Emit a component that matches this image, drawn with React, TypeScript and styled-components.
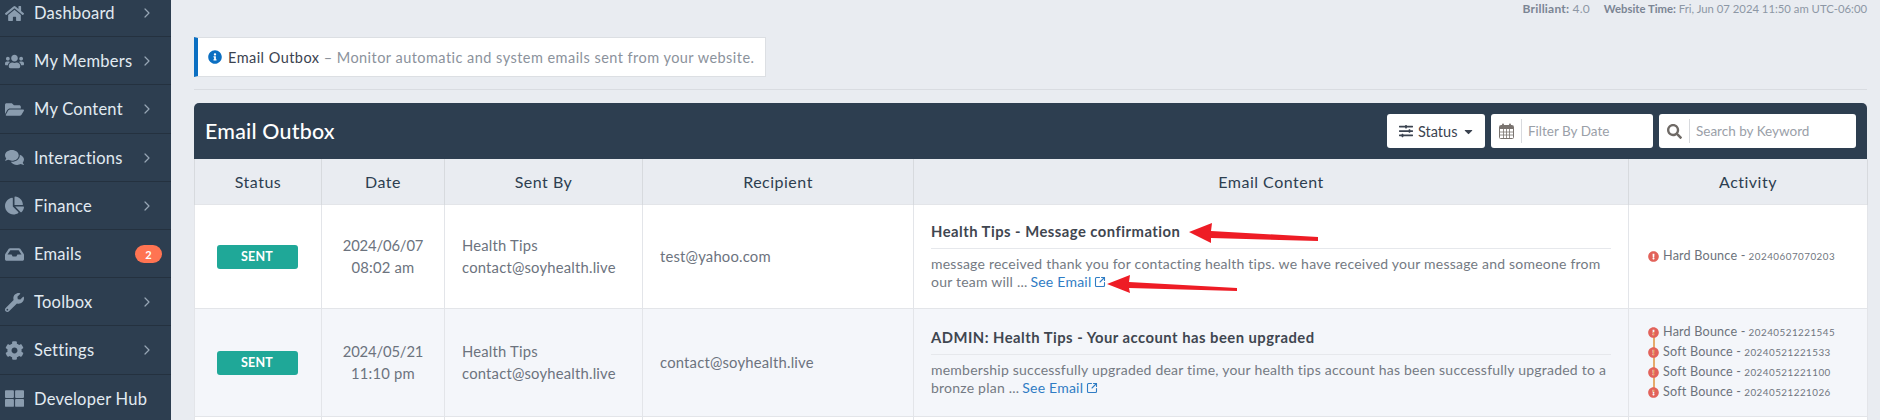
import React from "react";
import styled, { createGlobalStyle } from "styled-components";
import {
  FaHome, FaUsers, FaFolderOpen, FaComments, FaChartPie, FaInbox, FaWrench, FaCog, FaThLarge,
  FaInfoCircle, FaSlidersH, FaCaretDown, FaSearch, FaExclamationCircle,
} from "react-icons/fa";
import { ChevronRight, SquareArrowOutUpRight } from "lucide-react";

const Global = createGlobalStyle`
  html, body { margin: 0; padding: 0; height: 420px; overflow: hidden; background: #e9ecf1; }
  body { font-family: "Lato", "Noto Sans", "Liberation Sans", sans-serif; }
  * { box-sizing: border-box; }
`;

const Page = styled.div`
  display: flex;
  width: 1880px;
  height: 420px;
  overflow: hidden;
  position: relative;
`;

const Sidebar = styled.nav`
  flex: 0 0 171px;
  margin-top: -11px;
  height: 431px;
  background: #2d3e50;
`;

const NavItem = styled.div`
  display: flex;
  align-items: center;
  height: 48.2px;
  padding: 1px 9px 0 5px;
  border-bottom: 1px solid #24313f;
  color: #e2ebf2;
  font-size: 16.5px;
  letter-spacing: 0.25px;
`;

const NavIcon = styled.span`
  flex: 0 0 29px;
  display: flex;
  align-items: center;
  color: #8a9cae;
  font-size: 19px;
`;

const NavLabel = styled.span`
  flex: 1;
`;

const NavArrow = styled.span`
  display: flex;
  margin-right: 7px;
  color: #97a6b5;
`;

const NavBadge = styled.span`
  width: 27px;
  height: 18px;
  border-radius: 9px;
  background: #ff7452;
  color: #fff;
  font-size: 11px;
  font-weight: 700;
  display: flex;
  align-items: center;
  justify-content: center;
`;

const Main = styled.main`
  flex: 1;
  min-width: 0;
  padding: 0 13px 0 23px;
`;

const TopBar = styled.div`
  display: flex;
  justify-content: flex-end;
  align-items: baseline;
  gap: 14px;
  height: 37px;
  padding-top: 1px;
  line-height: 15px;
  color: #8d97a5;
`;

const TopItem = styled.span<{ $size: number; $spacing: number }>`
  font-size: ${(p) => p.$size}px;
  letter-spacing: ${(p) => p.$spacing}px;
`;

const TopLabel = styled.b`
  color: #7b8594;
  font-weight: 700;
`;

const InfoBox = styled.div`
  display: flex;
  align-items: center;
  gap: 6px;
  width: 572px;
  height: 40px;
  padding-left: 10px;
  background: #fff;
  border: 1px solid #dcdfe3;
  border-left: 4px solid #0b6fc2;
  font-size: 14.5px;
  color: #8b929c;
  letter-spacing: 0.46px;
  white-space: nowrap;
`;

const InfoIcon = styled.span`
  display: flex;
  color: #0b6fc2;
  font-size: 14px;
`;

const InfoTitle = styled.span`
  color: #3b4350;
`;

const Rule = styled.hr`
  margin: 12px 0 13px;
  border: 0;
  border-top: 1px solid #d9dce1;
`;

const Card = styled.section`
  position: relative;
`;

const CardHeader = styled.header`
  display: flex;
  align-items: center;
  justify-content: space-between;
  height: 56px;
  padding: 0 11px;
  background: #2d3e50;
  border-radius: 5px 5px 0 0;
`;

const CardTitle = styled.h1`
  margin: 0 0 1px;
  color: #fff;
  font-size: 21.4px;
  font-weight: 500;
  letter-spacing: 0.2px;
`;

const Tools = styled.div`
  display: flex;
  align-items: center;
  gap: 6px;
`;

const StatusButton = styled.div`
  display: flex;
  align-items: center;
  gap: 5px;
  width: 98px;
  height: 34px;
  padding-left: 12px;
  background: #fff;
  border-radius: 3px;
  color: #3b4350;
  font-size: 14.5px;
`;

const Field = styled.div<{ $width: number }>`
  display: flex;
  align-items: center;
  width: ${(p) => p.$width}px;
  height: 34px;
  background: #fff;
  border-radius: 3px;
  color: #9aa0a8;
  font-size: 13.5px;
`;

const FieldIcon = styled.span`
  flex: 0 0 31px;
  height: 24px;
  margin-right: 6px;
  display: flex;
  align-items: center;
  justify-content: center;
  border-right: 1px solid #d8dade;
  color: #6f6a66;
  font-size: 15px;
`;

const Table = styled.table`
  width: 100%;
  table-layout: fixed;
  border-collapse: collapse;
`;

const Th = styled.th`
  height: 45px;
  padding: 0;
  background: #e9ecf1;
  border: 1px solid #d7dade;
  border-top: 0;
  border-bottom: 0;
  color: #2d3e50;
  font-size: 16px;
  font-weight: 400;
  letter-spacing: 0.5px;
`;

const Tr = styled.tr<{ $alt?: boolean; $h: number }>`
  height: ${(p) => p.$h}px;
  background: ${(p) => (p.$alt ? "#f4f6fa" : "#fff")};
`;

const Td = styled.td<{ $center?: boolean }>`
  padding: 0 17px;
  border: 1px solid #e3e5e9;
  color: #6c737e;
  font-size: 14.8px;
  line-height: 22.3px;
  letter-spacing: 0.2px;
  text-align: ${(p) => (p.$center ? "center" : "left")};
  vertical-align: middle;
`;

const DateText = styled.span`
  letter-spacing: -0.15px;
`;

const Badge = styled.span`
  display: inline-block;
  width: 81px;
  height: 24px;
  margin-right: 2px;
  border-radius: 3px;
  background: #1fa898;
  color: #fff;
  font-size: 12.5px;
  font-weight: 700;
  line-height: 24px;
  text-align: center;
  vertical-align: middle;
`;

const Subject = styled.div`
  padding-bottom: 7px;
  border-bottom: 1px solid #e6e8ec;
  margin-bottom: 6px;
  color: #3f4650;
  font-size: 14.8px;
  line-height: 20px;
  font-weight: 700;
  letter-spacing: 0.48px;
`;

const Preview = styled.div`
  color: #747a83;
  font-size: 14px;
  line-height: 17.8px;
  letter-spacing: 0.22px;
  white-space: nowrap;
`;

const PreviewLine = styled.div`
  display: flex;
  gap: 3px;
`;

const SeeEmail = styled.a`
  color: #2f7cc4;
  svg { margin-left: 3px; vertical-align: -1px; }
`;

const ActivityList = styled.ul`
  list-style: none;
  margin: 0;
  padding: 0 0 0 2px;
`;

const ActivityItem = styled.li<{ $rail?: boolean }>`
  position: relative;
  display: flex;
  align-items: center;
  gap: 4px;
  height: 20px;
  color: #6c727b;
  font-size: 12.6px;
  letter-spacing: 0.2px;
  white-space: nowrap;
  ${(p) =>
    p.$rail &&
    `&::after {
      content: "";
      position: absolute;
      left: 4.5px;
      top: 10px;
      width: 2px;
      height: 20px;
      background: #e5ab6c;
    }`}
  svg { position: relative; z-index: 1; flex: none; color: #e2625a; font-size: 11px; }
`;

const Stamp = styled.small`
  margin-left: -1px;
  font-size: 9.8px;
  letter-spacing: 0.5px;
  color: #6f757e;
`;

const ArrowLayer = styled.svg`
  position: absolute;
  left: 0;
  top: 0;
  pointer-events: none;
`;

const nav = [
  { icon: <FaHome />, label: "Dashboard" },
  { icon: <FaUsers />, label: "My Members" },
  { icon: <FaFolderOpen />, label: "My Content" },
  { icon: <FaComments />, label: "Interactions" },
  { icon: <FaChartPie />, label: "Finance" },
  { icon: <FaInbox />, label: "Emails", badge: "2" },
  { icon: <FaWrench />, label: "Toolbox" },
  { icon: <FaCog />, label: "Settings" },
  { icon: <FaThLarge />, label: "Developer Hub", plain: true },
];

const rows = [
  {
    date: "2024/06/07",
    time: "08:02 am",
    recipient: "test@yahoo.com",
    subject: "Health Tips - Message confirmation",
    line1: "message received thank you for contacting health tips. we have received your message and someone from",
    line2: "our team will ...",
    h: 104,
    activity: [["Hard Bounce", "20240607070203"]],
  },
  {
    date: "2024/05/21",
    time: "11:10 pm",
    recipient: "contact@soyhealth.live",
    subject: "ADMIN: Health Tips - Your account has been upgraded",
    line1: "membership successfully upgraded dear time, your health tips account has been successfully upgraded to a",
    line2: "bronze plan ...",
    h: 108,
    activity: [
      ["Hard Bounce", "20240521221545"],
      ["Soft Bounce", "20240521221533"],
      ["Soft Bounce", "20240521221100"],
      ["Soft Bounce", "20240521221026"],
    ],
  },
];

const CalendarIcon = () => (
  <svg width="15" height="16" viewBox="0 0 15 16" fill="none">
    <rect x="0.5" y="2.5" width="14" height="13" rx="1" fill="#fff" stroke="#7a7470" />
    <rect x="1" y="3" width="13" height="3" fill="#7a7470" />
    <path d="M1 9h13M1 12h13M4.5 6v9M7.5 6v9M10.5 6v9" stroke="#7a7470" strokeWidth="0.8" />
    <rect x="3" y="0.5" width="2" height="4" rx="1" fill="#7a7470" />
    <rect x="10" y="0.5" width="2" height="4" rx="1" fill="#7a7470" />
  </svg>
);

export default function App() {
  return (
    <Page>
      <Global />
      <Sidebar>
        {nav.map((n) => (
          <NavItem key={n.label}>
            <NavIcon>{n.icon}</NavIcon>
            <NavLabel>{n.label}</NavLabel>
            {n.badge ? (
              <NavBadge>{n.badge}</NavBadge>
            ) : n.plain ? null : (
              <NavArrow>
                <ChevronRight size={16} strokeWidth={1.8} />
              </NavArrow>
            )}
          </NavItem>
        ))}
      </Sidebar>
      <Main>
        <TopBar>
          <TopItem $size={12} $spacing={0.2}>
            <TopLabel>Brilliant:</TopLabel> 4.0
          </TopItem>
          <TopItem $size={11.3} $spacing={0}>
            <TopLabel>Website Time:</TopLabel> Fri, Jun 07 2024 11:50 am UTC-06:00
          </TopItem>
        </TopBar>
        <InfoBox>
          <InfoIcon>
            <FaInfoCircle />
          </InfoIcon>
          <span>
            <InfoTitle>Email Outbox</InfoTitle> – Monitor automatic and system emails sent from your website.
          </span>
        </InfoBox>
        <Rule />
        <Card>
          <CardHeader>
            <CardTitle>Email Outbox</CardTitle>
            <Tools>
              <StatusButton>
                <FaSlidersH size={14} />
                Status
                <FaCaretDown size={13} />
              </StatusButton>
              <Field $width={162}>
                <FieldIcon>
                  <CalendarIcon />
                </FieldIcon>
                Filter By Date
              </Field>
              <Field $width={197}>
                <FieldIcon>
                  <FaSearch />
                </FieldIcon>
                Search by Keyword
              </Field>
            </Tools>
          </CardHeader>
          <Table>
            <colgroup>
              <col style={{ width: 127 }} />
              <col style={{ width: 123 }} />
              <col style={{ width: 198 }} />
              <col style={{ width: 271 }} />
              <col style={{ width: 715 }} />
              <col style={{ width: 239 }} />
            </colgroup>
            <thead>
              <tr>
                <Th>Status</Th>
                <Th>Date</Th>
                <Th>Sent By</Th>
                <Th>Recipient</Th>
                <Th>Email Content</Th>
                <Th>Activity</Th>
              </tr>
            </thead>
            <tbody>
              {rows.map((r, i) => (
                <Tr key={r.date} $alt={i % 2 === 1} $h={r.h}>
                  <Td $center>
                    <Badge>SENT</Badge>
                  </Td>
                  <Td $center>
                    <DateText>{r.date}</DateText>
                    <br />
                    {r.time}
                  </Td>
                  <Td>
                    Health Tips
                    <br />
                    contact@soyhealth.live
                  </Td>
                  <Td>{r.recipient}</Td>
                  <Td>
                    <Subject>{r.subject}</Subject>
                    <Preview>
                      <PreviewLine>{r.line1}</PreviewLine>
                      <PreviewLine>
                        <span>{r.line2}</span>
                        <SeeEmail>
                          See Email
                          <SquareArrowOutUpRight size={12} strokeWidth={2.2} />
                        </SeeEmail>
                      </PreviewLine>
                    </Preview>
                  </Td>
                  <Td>
                    <ActivityList>
                      {r.activity.map(([kind, stamp], j) => (
                        <ActivityItem key={stamp} $rail={j < r.activity.length - 1}>
                          <FaExclamationCircle />
                          {kind} -<Stamp>{stamp}</Stamp>
                        </ActivityItem>
                      ))}
                    </ActivityList>
                  </Td>
                </Tr>
              ))}
              <Tr $h={20}>
                <Td />
                <Td />
                <Td />
                <Td />
                <Td />
                <Td />
              </Tr>
            </tbody>
          </Table>
        </Card>
      </Main>
      <ArrowLayer width="1880" height="420" viewBox="0 0 1880 420">
        <path d="M1189 232 L1212 223 L1211 231 L1318 237 L1318 241 L1211 238 L1211 243 Z" fill="#ee1c25" />
        <path d="M1107 284 L1130 275 L1129 282 L1237 288 L1237 291 L1129 288 L1130 293 Z" fill="#ee1c25" />
      </ArrowLayer>
    </Page>
  );
}
